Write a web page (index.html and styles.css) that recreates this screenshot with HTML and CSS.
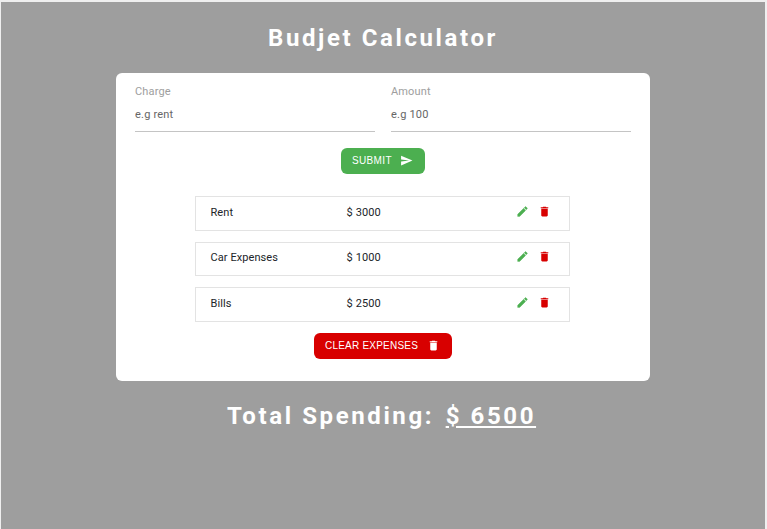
FILE: index.html
```html
<!DOCTYPE html>
<html lang="en">
<head>
<meta charset="utf-8">
<title>Budjet Calculator</title>
<link rel="stylesheet" href="styles.css">
</head>
<body>
<svg width="0" height="0" class="defs">
  <symbol id="trash" viewBox="0 0 24 24"><path d="M6 19c0 1.100.9 2 2 2h8c1.100 0 2-.9 2-2V7H6v12zM19 4h-3.500l-1-1h-5l-1 1H5v2h14V4z"/></symbol>
  <symbol id="pencil" viewBox="0 0 24 24"><path d="M3 17.250V21h3.750L17.810 9.940l-3.750-3.750L3 17.250zM20.710 7.040a1 1 0 0 0 0-1.410l-2.340-2.340a1 1 0 0 0-1.410 0l-1.830 1.830 3.750 3.750 1.830-1.830z"/></symbol>
  <symbol id="send" viewBox="0 0 24 24"><path d="M2.010 21L23 12 2.010 3 2 10l15 2-15 2z"/></symbol>
</svg>
<div class="page">
  <h1 class="title">Budjet Calculator</h1>
  <main class="card">
    <form>
      <div class="fields">
        <label class="field"><span>Charge</span><input type="text" placeholder="e.g rent"></label>
        <label class="field"><span>Amount</span><input type="text" placeholder="e.g 100"></label>
      </div>
      <button type="button" class="btn submit">SUBMIT<svg><use href="#send"/></svg></button>
    </form>
    <ul class="list">
      <li class="item"><span class="name">Rent</span><span class="amount">$ 3000</span><svg class="edit"><use href="#pencil"/></svg><svg class="delete"><use href="#trash"/></svg></li>
      <li class="item"><span class="name">Car Expenses</span><span class="amount">$ 1000</span><svg class="edit"><use href="#pencil"/></svg><svg class="delete"><use href="#trash"/></svg></li>
      <li class="item"><span class="name">Bills</span><span class="amount">$ 2500</span><svg class="edit"><use href="#pencil"/></svg><svg class="delete"><use href="#trash"/></svg></li>
    </ul>
    <button type="button" class="btn clear">CLEAR EXPENSES<svg><use href="#trash"/></svg></button>
  </main>
  <h1 class="title total">Total Spending: <span class="sum">$ 6500</span></h1>
</div>
</body>
</html>
```
FILE: styles.css
```css
* { box-sizing: border-box; }
body {
  margin: 0;
  background: #efefef;
  font-family: Roboto, "Liberation Sans", sans-serif;
  font-size: 11px;
  color: #212529;
}
.defs { display: block; }
.page {
  height: 527px;
  margin: 2px 2px 0 1px;
  padding-top: 20px;
  background: #9e9e9e;
  overflow: hidden;
}
.title {
  margin: 0;
  height: 32px;
  line-height: 32px;
  text-align: center;
  font-size: 24px;
  font-weight: 700;
  letter-spacing: 2.6px;
  color: #fff;
}
.card {
  width: 534px;
  height: 308px;
  margin: 19px auto 0;
  padding: 10px 19px 0;
  background: #fff;
  border-radius: 6px;
}
.fields { display: flex; gap: 16px; }
.field { flex: 1; color: #9e9e9e; line-height: 18px; }
.field span { display: block; letter-spacing: .15px; }
.field input {
  display: block;
  width: 100%;
  height: 31px;
  padding: 0 0 4px;
  border: 0;
  border-bottom: 1px solid #c4c4c4;
  outline: 0;
  font: 11px Roboto, sans-serif;
  letter-spacing: .2px;
}
.field input::placeholder { color: #666; }
.btn {
  display: flex;
  align-items: center;
  justify-content: space-between;
  height: 26px;
  margin: 0 auto;
  padding: 0 12px 1px 11px;
  border: 0;
  border-radius: 6px;
  color: #fff;
  font: 10px "Liberation Sans", sans-serif;
  letter-spacing: .35px;
}
.btn svg { width: 13px; height: 13px; fill: currentColor; }
.submit { width: 84px; margin-top: 16px; background: #4caf50; }
.clear { width: 138px; background: #d80000; letter-spacing: .22px; }
.list {
  display: grid;
  gap: 11px;
  width: 375px;
  margin: 22px 0 11px 60px;
  padding: 0;
  list-style: none;
}
.item {
  display: grid;
  grid-template-columns: 136px 169px 22px 14px;
  align-items: center;
  height: 34.5px;
  padding: 0 14px 2px 14.5px;
  border: 1px solid #e3e3e3;
}
.item svg { width: 13px; height: 13px; margin-top: -2px; }
.edit { fill: #4caf50; stroke: #4caf50; stroke-width: .6px; }
.delete { fill: #d80000; }
.name { letter-spacing: .08px; }
.amount { letter-spacing: .12px; }
.total { margin-top: 19px; padding-right: 3px; }
.sum { margin-left: 3px; text-decoration: underline; }
```
